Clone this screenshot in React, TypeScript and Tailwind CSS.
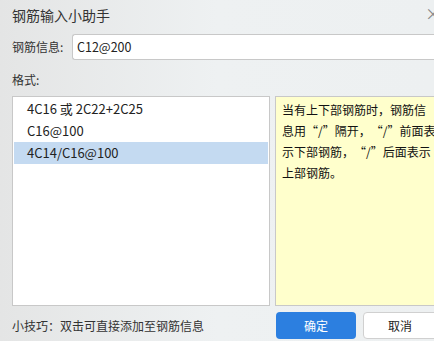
import React from "react";

function Q() {
  return (
    <>
      <span className="inline-block w-[12px] text-right">“</span>/<span className="inline-block w-[12px] text-left">”</span>
    </>
  );
}

export default function App() {
  const font = { fontFamily: '"Microsoft YaHei", "Noto Sans CJK SC", "Noto Sans", sans-serif' };
  const items = ["4C16 或 2C22+2C25", "C16@100", "4C14/C16@100"];
  return (
    <div
      lang="zh-CN"
      className="w-[434px] h-[341px] overflow-hidden bg-gradient-to-r from-[#e4e5e5] via-[#eef1f2] to-[#edf0f1] text-[#333] text-[12px] flex flex-col"
      style={font}
    >
      <div className="h-[30px] shrink-0 flex items-center pl-[12px] pr-0 relative">
        <span className="text-[14px] text-[#333]">钢筋输入小助手</span>
        <span className="absolute right-[-7px] top-[5px] text-[#888] text-[16px] leading-none">×</span>
      </div>
      <div className="flex items-center pl-[12px] mt-[4px] h-[26px]">
        <span className="w-[60px] shrink-0">钢筋信息:</span>
        <div className="flex-1 h-[26px] bg-white border border-[#c8c8c8] rounded-l-[3px] border-r-0 flex items-center pl-[4px] text-[#222] text-[12.5px]">
          C12@200
        </div>
      </div>
      <div className="pl-[12px] mt-[10px] h-[20px] flex items-center">格式:</div>
      <div className="flex mt-[6px] pl-[12px] gap-[5px] h-[210px]">
        <div className="w-[258px] shrink-0 h-full bg-white border border-[#c8c8c8] pt-[1px] px-[1px] text-[13px]">
          {items.map((t, i) => (
            <div
              key={i}
              className={`h-[22px] flex items-center pl-[13px] text-[#222] ${i === 2 ? "bg-[#c4daf1]" : ""}`}
            >
              {t}
            </div>
          ))}
        </div>
        <div className="w-[170px] shrink-0 h-full bg-[#ffffcc] border border-[#c8c8c8] pl-[6px] pr-[8px] pt-[2px] text-[#111] leading-[21px] break-all">
          当有上下部钢筋时，钢筋信息用<Q />隔开，<Q />前面表示下部钢筋，<Q />后面表示上部钢筋。
        </div>
      </div>
      <div className="flex items-center pl-[12px] mt-[6px] h-[27px]">
        <span className="w-[264px] shrink-0 text-[#333]">小技巧：双击可直接添加至钢筋信息</span>
        <div className="w-[80px] shrink-0 h-[27px] rounded-[4px] bg-[#2c7fe0] text-white flex items-center justify-center">确定</div>
        <div className="ml-[7px] w-[90px] shrink-0 h-[27px] rounded-[4px] bg-white border border-[#d0d0d0] flex items-center justify-start pl-[24px] text-[#222]">取消</div>
      </div>
    </div>
  );
}
